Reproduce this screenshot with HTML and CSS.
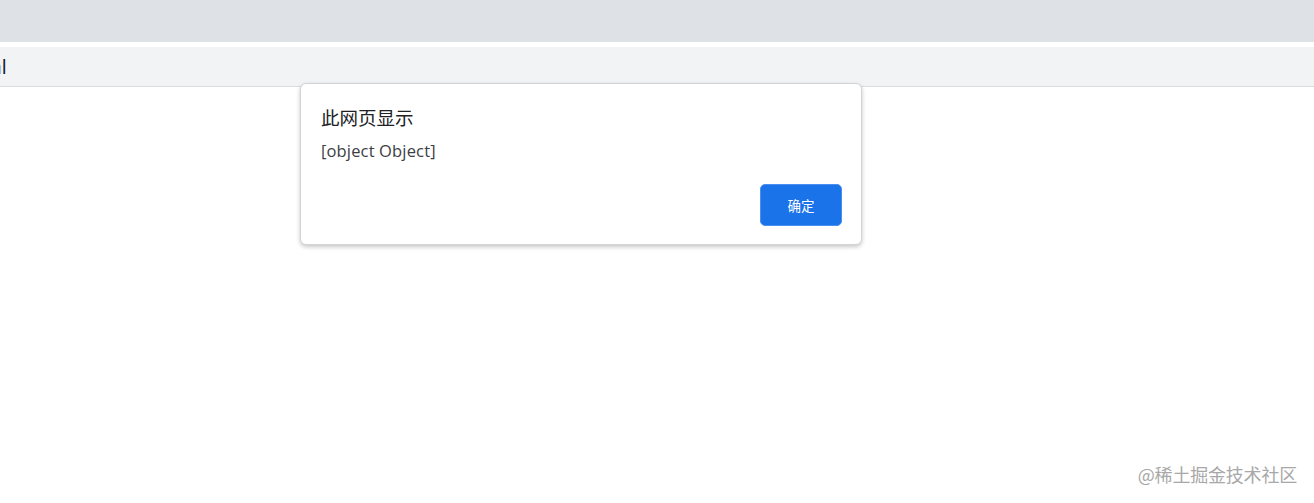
FILE: index.html
```html
<!DOCTYPE html>
<html lang="zh-CN">
<head>
<meta charset="utf-8">
<title>此网页显示</title>
<link rel="stylesheet" href="styles.css">
</head>
<body>
  <div class="tabstrip"></div>
  <div class="toolbar-gap"></div>
  <div class="bookmarks"><span class="crop">al</span></div>
  <main class="content"></main>

  <div class="dialog" role="alertdialog">
    <div class="dialog-title">此网页显示</div>
    <div class="dialog-msg">[object Object]</div>
    <div class="dialog-actions">
      <button class="btn-ok">确定</button>
    </div>
  </div>

  <div class="watermark">@稀土掘金技术社区</div>
</body>
</html>
```

FILE: styles.css
```css
html, body {
  margin: 0;
  padding: 0;
  background: #ffffff;
  font-family: "Open Sans", "Noto Sans CJK SC", sans-serif;
  overflow: hidden;
}
body {
  width: 1314px;
  height: 503px;
  position: relative;
}
.tabstrip {
  height: 42px;
  background: #dee1e6;
}
.toolbar-gap {
  height: 5px;
  background: #ffffff;
}
.bookmarks {
  height: 39px;
  background: #f1f3f4;
  border-bottom: 1px solid #dadce0;
  display: flex;
  align-items: center;
  overflow: hidden;
}
.crop {
  margin-left: -9px;
  font-size: 19px;
  color: #1a2233;
  font-family: "Noto Sans", "Noto Sans CJK SC", sans-serif;
}
.content {
  height: 416px;
}
.dialog {
  position: absolute;
  left: 300px;
  top: 83px;
  width: 562px;
  height: 162px;
  box-sizing: border-box;
  background: #ffffff;
  border: 1px solid #d4d4d4;
  border-radius: 6px;
  box-shadow: 0 2px 4px rgba(0,0,0,0.22);
  padding: 21px 19px 0 20px;
  display: flex;
  flex-direction: column;
}
.dialog-title {
  font-family: "Noto Sans CJK SC", sans-serif;
  font-size: 18.5px;
  line-height: 24px;
  color: #202124;
}
.dialog-msg {
  margin-top: 11px;
  font-family: "Open Sans", "Noto Sans CJK SC", sans-serif;
  font-size: 16.5px;
  letter-spacing: 0.15px;
  line-height: 22px;
  color: #3c4043;
}
.dialog-actions {
  margin-top: auto;
  margin-bottom: 18px;
  display: flex;
  justify-content: flex-end;
}
.btn-ok {
  width: 82px;
  height: 42px;
  background: #1a73e8;
  border: 1px solid #4a8ff0;
  border-radius: 5px;
  color: #ffffff;
  font-family: "Noto Sans CJK SC", sans-serif;
  font-size: 13.5px;
  padding: 0;
}
.watermark {
  position: absolute;
  right: 17px;
  top: 462px;
  font-family: "Noto Sans CJK SC", sans-serif;
  font-size: 18px;
  line-height: 24px;
  color: #a8a8a8;
  letter-spacing: -0.2px;
}
```
